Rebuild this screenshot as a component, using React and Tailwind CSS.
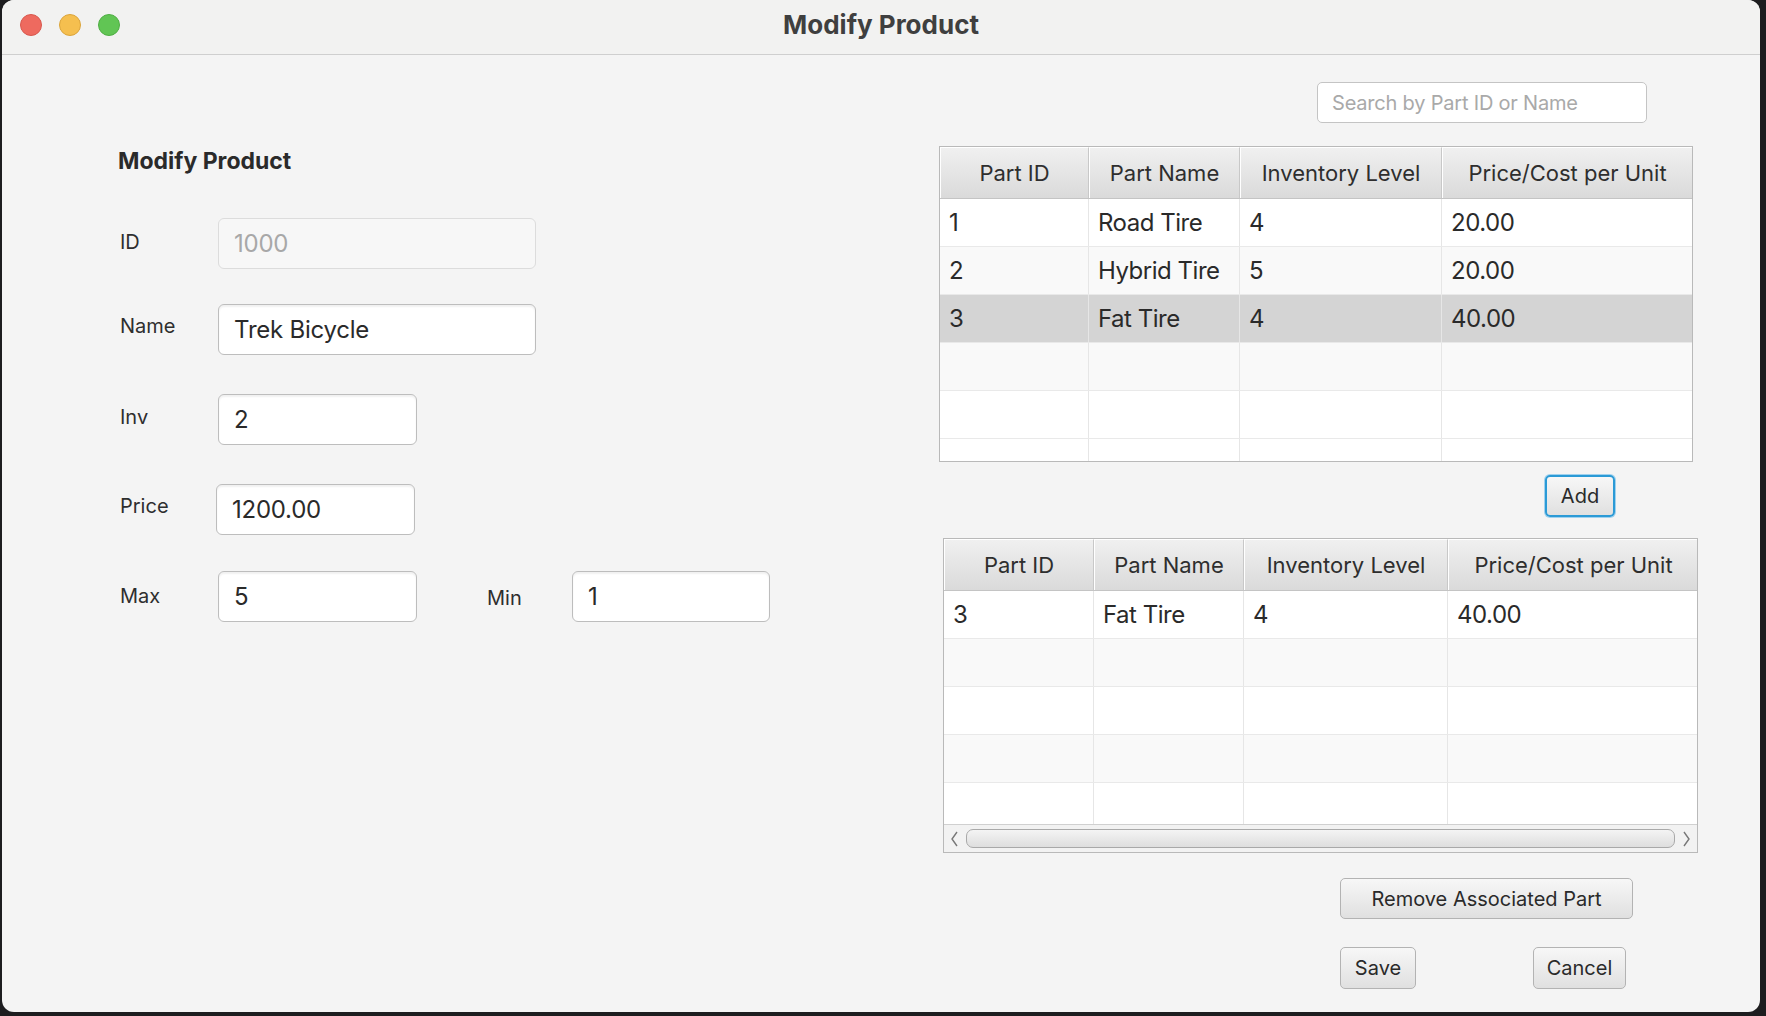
import React from 'react';

const font = { fontFamily: 'Inter, "Noto Sans", sans-serif' };

const topRows = [
  { id: '1', name: 'Road Tire', inv: '4', price: '20.00' },
  { id: '2', name: 'Hybrid Tire', inv: '5', price: '20.00' },
  { id: '3', name: 'Fat Tire', inv: '4', price: '40.00', selected: true },
];

const bottomRows = [{ id: '3', name: 'Fat Tire', inv: '4', price: '40.00' }];

const headers = ['Part ID', 'Part Name', 'Inventory Level', 'Price/Cost per Unit'];

function Field({ value, disabled, className }) {
  return (
    <div
      className={`h-[51px] flex items-center pl-[15px] rounded-[6px] border text-[24px] tracking-[-0.01em] ${
        disabled
          ? 'bg-[#f7f7f7] border-[#dcdcdc] text-[#a8a8a8]'
          : 'bg-white border-[#bdbdbd] text-[#2a2a2a] shadow-[inset_0_2px_2px_rgba(0,0,0,0.06)]'
      } ${className}`}
    >
      {value}
    </div>
  );
}

function Button({ children, className, focused }) {
  return (
    <div
      className={`flex items-center justify-center rounded-[5px] text-[20px] text-[#2a2a2a] bg-gradient-to-b from-[#f7f7f7] to-[#e0e0e0] ${
        focused
          ? 'border-2 border-[#2b9ad6] shadow-[0_0_0_1px_#9fd1ee]'
          : 'border border-[#b3b3b3]'
      } ${className}`}
    >
      {children}
    </div>
  );
}

function PartTable({ rows, cols, emptyRows, lastPartial, scrollbar, className }) {
  const template = { gridTemplateColumns: cols.map(c => `${c}px`).join(' ') };
  const all = [...rows];
  for (let i = 0; i < emptyRows; i++) all.push(null);
  return (
    <div className={`border border-[#b9b9b9] bg-[#f9f9f9] overflow-hidden flex flex-col ${className}`}>
      <div className="grid h-[52px] shrink-0 border-b border-[#c4c4c4]" style={template}>
        {headers.map((h, i) => (
          <div
            key={h}
            className={`flex items-center justify-center text-[22px] text-[#2e2e2e] bg-gradient-to-b from-[#f0f0f0] to-[#dadada] border-t border-l border-white ${
              i < 3 ? 'border-r border-r-[#c8c8c8]' : ''
            }`}
          >
            {h}
          </div>
        ))}
      </div>
      <div className="flex-1 flex flex-col overflow-hidden">
        {all.map((r, idx) => (
          <div
            key={idx}
            className={`grid h-[48px] shrink-0 border-b border-[#e9e9e9] ${
              r && r.selected ? 'bg-[#d4d4d4]' : idx % 2 === 0 ? 'bg-white' : 'bg-[#f9f9f9]'
            }`}
            style={template}
          >
            {(r ? [r.id, r.name, r.inv, r.price] : ['', '', '', '']).map((v, i) => (
              <div
                key={i}
                className={`flex items-center pl-[9px] text-[24px] tracking-[-0.02em] text-[#2a2a2a] ${
                  i < 3 ? 'border-r border-[#e6e6e6]' : ''
                }`}
              >
                {v}
              </div>
            ))}
          </div>
        ))}
        {lastPartial && (
          <div className="grid flex-1 bg-white" style={template}>
            {[0, 1, 2, 3].map(i => (
              <div key={i} className={i < 3 ? 'border-r border-[#e6e6e6]' : ''} />
            ))}
          </div>
        )}
      </div>
      {scrollbar && (
        <div className="h-[28px] shrink-0 flex items-center bg-[#f2f2f2] border-t border-[#d0d0d0] px-[4px] gap-[4px]">
          <svg width="14" height="18" viewBox="0 0 14 18" className="shrink-0">
            <path d="M9 2 L4 9 L9 16" fill="none" stroke="#777" strokeWidth="1.4" />
          </svg>
          <div className="flex-1 h-[19px] rounded-[7px] border border-[#a9a9a9] bg-gradient-to-b from-[#f4f4f4] to-[#dedede]" />
          <svg width="14" height="18" viewBox="0 0 14 18" className="shrink-0">
            <path d="M5 2 L10 9 L5 16" fill="none" stroke="#777" strokeWidth="1.4" />
          </svg>
        </div>
      )}
    </div>
  );
}

export default function App() {
  return (
    <div className="w-[1766px] h-[1016px] bg-[#1d1d1f] overflow-hidden" style={font}>
      <div className="ml-[2px] w-[1758px] h-[1012px] bg-[#f4f4f4] rounded-[12px] overflow-hidden flex flex-col">
        {/* Title bar */}
        <div className="h-[55px] shrink-0 relative flex items-center justify-center bg-[#f2f2f1] border-b border-[#cfcfcf]">
          <div className="absolute left-[18px] top-[14px] flex gap-[17px]">
            <div className="w-[22px] h-[22px] rounded-full bg-[#ee6a5f] border border-[#d8574d]" />
            <div className="w-[22px] h-[22px] rounded-full bg-[#f5bf4f] border border-[#dba43a]" />
            <div className="w-[22px] h-[22px] rounded-full bg-[#61c554] border border-[#4fae43]" />
          </div>
          <span className="text-[26px] font-bold text-[#3f3f3f] -mt-[5px]">Modify Product</span>
        </div>

        {/* Content */}
        <div className="flex flex-1">
          {/* Left form */}
          <div className="w-[937px] shrink-0 pl-[116px] pt-[90px]">
            <div className="text-[23px] font-bold text-[#2a2a2a] h-[32px] leading-[32px]">Modify Product</div>

            <div className="mt-[41px] flex items-center">
              <div className="w-[100px] pl-[2px] text-[20px] text-[#2e2e2e] -mt-[3px]">ID</div>
              <Field value="1000" disabled className="w-[318px]" />
            </div>
            <div className="mt-[35px] flex items-center">
              <div className="w-[100px] pl-[2px] text-[20px] text-[#2e2e2e] -mt-[7px]">Name</div>
              <Field value="Trek Bicycle" className="w-[318px]" />
            </div>
            <div className="mt-[39px] flex items-center">
              <div className="w-[100px] pl-[2px] text-[20px] text-[#2e2e2e] -mt-[6px]">Inv</div>
              <Field value="2" className="w-[199px]" />
            </div>
            <div className="mt-[39px] flex items-center">
              <div className="w-[98px] pl-[2px] text-[20px] text-[#2e2e2e] -mt-[8px]">Price</div>
              <Field value="1200.00" className="w-[199px]" />
            </div>
            <div className="mt-[36px] flex items-center">
              <div className="w-[100px] pl-[2px] text-[20px] text-[#2e2e2e] -mt-[2px]">Max</div>
              <Field value="5" className="w-[199px]" />
              <div className="w-[155px] pl-[70px] text-[20px] text-[#2e2e2e] mt-[2px]">Min</div>
              <Field value="1" className="w-[198px]" />
            </div>
          </div>

          {/* Right tables */}
          <div className="flex-1 pt-[27px]">
            <div className="ml-[378px] w-[330px] h-[41px] flex items-center pl-[14px] bg-white border border-[#c4c4c4] rounded-[5px] text-[20px] tracking-[-0.01em] text-[#a9a9a9]">
              Search by Part ID or Name
            </div>

            <PartTable
              rows={topRows}
              cols={[149, 151, 202, 250]}
              emptyRows={2}
              lastPartial
              className="mt-[23px] w-[754px] h-[316px]"
            />

            <Button focused className="mt-[13px] ml-[606px] w-[70px] h-[42px]">Add</Button>

            <PartTable
              rows={bottomRows}
              cols={[150, 150, 204, 250]}
              emptyRows={3}
              lastPartial
              scrollbar
              className="mt-[21px] ml-[4px] w-[755px] h-[315px]"
            />

            <Button className="mt-[25px] ml-[401px] w-[293px] h-[41px]">Remove Associated Part</Button>

            <div className="mt-[28px] ml-[401px] flex gap-[117px]">
              <Button className="w-[76px] h-[42px]">Save</Button>
              <Button className="w-[93px] h-[42px]">Cancel</Button>
            </div>
          </div>
        </div>
      </div>
    </div>
  );
}
